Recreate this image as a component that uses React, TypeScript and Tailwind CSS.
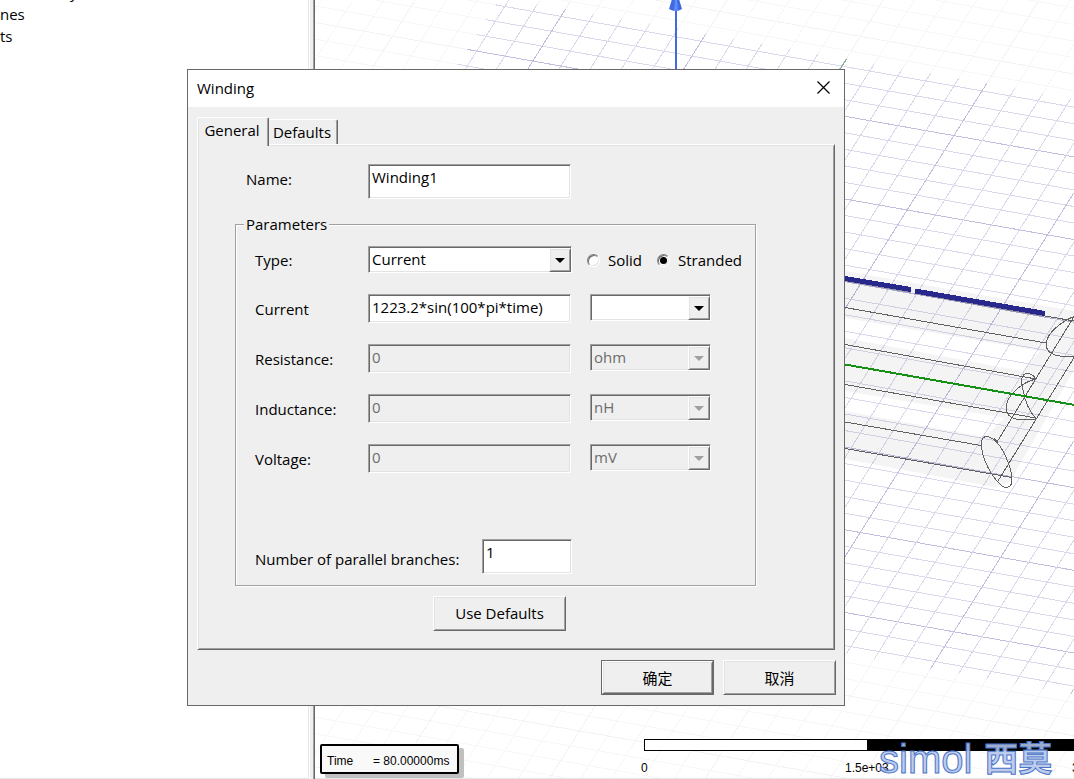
import { ReactNode } from "react";

const sunken =
  "border border-t-[#a0a0a0] border-l-[#a0a0a0] border-b-white border-r-white shadow-[inset_1px_1px_0_#696969,inset_-1px_-1px_0_#e3e3e3]";
const raised =
  "border border-t-white border-l-white border-b-[#696969] border-r-[#696969] shadow-[inset_1px_1px_0_#e3e3e3,inset_-1px_-1px_0_#a0a0a0]";

// The ground grid is a lattice of two line families.
// "rows" run along the green axis, "cols" cross them.
const ROW_SLOPE = 0.177;
const COL_SLOPE = 0.629;

const rowY = (i: number, x: number) => 364.4 + i * 16.54 + ROW_SLOPE * (x - 845);
const colX = (i: number, y: number) => 568.7 + i * 31.2 - COL_SLOPE * (y - 500);

const range = (from: number, to: number) =>
  Array.from({ length: to - from + 1 }, (_, i) => from + i);

const GridLines = ({ minor, major }: { minor: string; major: string }) => (
  <g shapeRendering="crispEdges">
    {range(-30, 40).map((i) => (
      <line key={`r${i}`} x1={300} y1={rowY(i, 300)} x2={1500} y2={rowY(i, 1500)} stroke={i % 5 === 0 ? major : minor} />
    ))}
    {range(-24, 50).map((i) => (
      <line key={`c${i}`} x1={colX(i, -20)} y1={-20} x2={colX(i, 900)} y2={900} stroke={i % 5 === 0 ? major : minor} />
    ))}
  </g>
);

const Scene = () => (
  <svg className="absolute inset-0 h-full w-full" aria-hidden="true">
    <defs>
      <clipPath id="ground">
        <path d="M500 -2.7 L1500 174.3 L1500 769.3 L400 575 L186 496 Z" />
      </clipPath>
    </defs>
    <g transform="translate(-315 0)" fill="none">
      <GridLines minor="#f7f7f7" major="#f3f3f3" />
      <g clipPath="url(#ground)">
        <path d="M300 -250 H1500 V900 H300 Z" fill="#fff" />
        <GridLines minor="#dad8eb" major="#c1bede" />
      </g>
      <path d="M846.5 59 L834 79" stroke="#86b386" shapeRendering="crispEdges" />

      {/* windings */}
      <path
        fill="#000"
        fillOpacity="0.045"
        d="M845 271 L1074 311 L1074 370 L1010 482 L994 487 L845 459 V411 L984 437 L1005 418 L845 391 V338 L1022 371 L1040 351 L845 318 Z"
      />
      <g stroke="#606060" shapeRendering="crispEdges">
        <path d="M1045 316 L1080 322" />
        <path d="M845 307.5 L1046 343" />
        <path d="M845 344.5 L1036 379" />
        <path d="M845 384.5 L1036 418" />
        <path d="M845 422 L981 445.5" />
        <path d="M845 448.5 L1012 477.5" />
        <path d="M1075 315 L997 442 L994 438" />
        <path d="M1075 356 L998 481" />
        <path d="M1080 315 C1068 317 1046 331 1046 345 C1047 355 1058 358 1080 356" />
        <path d="M1036 379 C1034 376 1030 373 1026 373.5 C1021 375 1021 382 1023 390 C1025 402 1030 412 1036 418.5" />
        <path d="M1036 379 C1022 382 1006 396 1006 408 C1007 420 1018 421 1036 419" />
        <path d="M982 440 C984 434 992 436 1000 446 C1008 458 1012 472 1012 481 C1011 489 1004 490 997 481 C989 472 979 452 982 440 Z" />
      </g>
      <path d="M845 280 L911 291.5 M915 292.5 L1044 315.5" stroke="#8b8ba0" strokeWidth="3" />
      <path d="M845 278.5 L911 289.5 M915 291 L1045 313.5" stroke="#28288c" strokeWidth="5" shapeRendering="crispEdges" />
      <path d="M845 364.5 L1500 480" stroke="#149014" strokeWidth="2" shapeRendering="crispEdges" />

      {/* z axis */}
      <path d="M676 10 V400" stroke="#4169e1" strokeWidth="2" />
      <path d="M672 -1 H679 L682 9 Q676 13 669 9 Z" fill="#4169e1" />
      <path d="M675 -1 H677 L678 11 H674 Z" fill="#5c8cff" />
    </g>
  </svg>
);

const TreePane = () => (
  <div className="w-[309px] shrink-0 overflow-hidden border-r border-b border-[#e6e6e6] bg-white">
    <ul className="-mt-[19px] text-[15px] leading-[22px]">
      <li className="pl-[70px]">y</li>
      <li>nes</li>
      <li>ts</li>
    </ul>
  </div>
);

const Viewport = () => (
  <div className="relative flex-1 overflow-hidden border-b border-b-[#e6e6e6] bg-white font-['Liberation_Sans',Arial,sans-serif] text-black">
    <Scene />
    <div className="absolute bottom-1 left-[5px] flex h-[30px] w-[139px] items-center rounded-xs border-2 border-black bg-[#f9f9f9] pt-1 pl-[5px] text-[12px] leading-4 whitespace-nowrap shadow-[5px_4px_0_#c0c0c0]">
      <span className="w-[46px] shrink-0">Time</span>
      <span>= 80.00000ms</span>
    </div>
    <div className="absolute right-0 bottom-0 left-[326px]">
      <div className="ml-[3px] flex h-3 border-y border-l border-black">
        <div className="w-[222px] bg-white" />
        <div className="flex-1 bg-black" />
      </div>
      <div className="flex h-[27px] items-center pt-1.5 text-[12px] leading-4 whitespace-nowrap">
        <span className="w-[204px] shrink-0">0</span>
        <span className="w-[227px] shrink-0">1.5e+03</span>
        <span>3e+03 (mm)</span>
      </div>
    </div>
    <div className="absolute bottom-0 left-[564px] flex items-center gap-3 leading-[38px] whitespace-nowrap text-[#b4c5ea]/90 [-webkit-text-stroke:1px_#4a74c6]">
      <span className="text-[40px]">simol</span>
      <span className="pb-1 font-['Noto_Sans_CJK_SC',sans-serif] text-[34px] leading-[34px] font-bold">西莫</span>
    </div>
  </div>
);

const Field = ({ id, value, disabled, className }: { id: string; value: string; disabled?: boolean; className: string }) => (
  <input
    id={id}
    type="text"
    defaultValue={value}
    disabled={disabled}
    className={`${sunken} ${className} shrink-0 bg-white pl-[3px] outline-none disabled:bg-[#efefef] disabled:text-[#6d6d6d]`}
  />
);

const Dropdown = ({ id, label, options, disabled, className }: { id: string; label?: string; options: string[]; disabled?: boolean; className: string }) => (
  <div className={`${sunken} ${className} relative h-[27px] shrink-0 ${disabled ? "bg-[#efefef]" : "bg-white"}`}>
    <select
      id={id}
      aria-label={label}
      disabled={disabled}
      className="h-[23px] w-full appearance-none bg-transparent pl-[3px] leading-[22px] outline-none disabled:text-[#6d6d6d] disabled:opacity-100"
    >
      {options.map((option) => (
        <option key={option}>{option}</option>
      ))}
    </select>
    <span className={`${raised} pointer-events-none absolute top-px right-0 bottom-0 flex w-[22px] items-center justify-center bg-[#efefef] pr-px`}>
      <svg width="10" height="5" className={disabled ? "fill-[#a0a0a0]" : "fill-black"}>
        <path d="M0 0 H10 L5 5 Z" />
      </svg>
    </span>
  </div>
);

const Radio = ({ label, checked }: { label: string; checked?: boolean }) => (
  <label className="flex items-center gap-2">
    <input
      type="radio"
      name="conductor"
      defaultChecked={checked}
      className="grid size-[13px] appearance-none place-items-center rounded-full border border-t-[#808080] border-r-white border-b-white border-l-[#808080] bg-white shadow-[inset_1px_1px_0_#696969,inset_-1px_-1px_0_#e3e3e3] before:size-[7px] before:rounded-full checked:before:bg-black"
    />
    {label}
  </label>
);

const Row = ({ id, label, children }: { id: string; label: string; children: ReactNode }) => (
  <div className="flex items-center">
    <label htmlFor={id} className="w-[113px] shrink-0 pt-px">
      {label}
    </label>
    {children}
  </div>
);

const disabledRows = [
  { id: "resistance", label: "Resistance:", unit: "ohm" },
  { id: "inductance", label: "Inductance:", unit: "nH" },
  { id: "voltage", label: "Voltage:", unit: "mV" },
];

const WindingDialog = () => (
  <div role="dialog" aria-labelledby="dialog-title" className="absolute top-[69px] left-[187px] w-[658px] border border-[#696969] bg-[#efefef]">
    <div className="flex h-[37px] items-center justify-between bg-white pr-[14px] pb-0.5 pl-[9px]">
      <h1 id="dialog-title">Winding</h1>
      <button type="button" aria-label="Close">
        <svg width="13" height="13" stroke="#000" strokeWidth="1.2">
          <path d="M0.5 0.5 L12.5 12.5 M12.5 0.5 L0.5 12.5" />
        </svg>
      </button>
    </div>

    <div className="px-[9px] py-[10px]">
      <div role="tablist" className="flex items-end">
        <button
          type="button"
          role="tab"
          aria-selected="true"
          className="relative z-10 -mb-[2px] h-[29px] w-[72px] rounded-t-xs border border-b-0 border-t-white border-r-[#696969] border-l-white bg-[#efefef] pr-0.5 pb-[5px] shadow-[inset_1px_0_0_#e3e3e3,inset_-1px_0_0_#a0a0a0]"
        >
          General
        </button>
        <button
          type="button"
          role="tab"
          aria-selected="false"
          className="h-[25px] w-[69px] rounded-t-xs border border-b-0 border-l-0 border-t-white border-r-[#696969] pr-0.5 shadow-[inset_-1px_0_0_#a0a0a0]"
        >
          Defaults
        </button>
      </div>

      <div role="tabpanel" className={`${raised} flex flex-col pt-[19px] pr-[78px] pb-[18px] pl-[37px]`}>
        <div className="flex items-center pl-[11px]">
          <label htmlFor="name" className="w-[122px] shrink-0 pb-[5px]">
            Name:
          </label>
          <Field id="name" value="Winding1" className="h-[35px] w-[203px] pb-[9px]" />
        </div>

        <fieldset className="mt-3.5 border border-[#a0a0a0] pt-[11px] pb-[11px] pl-[19px] shadow-[inset_1px_1px_0_#fff,1px_1px_0_#fff]">
          <legend className="-ml-[11px] bg-[#efefef] px-[2px] leading-[22px]">Parameters</legend>
          <div className="flex flex-col gap-[21px]">
            <Row id="type" label="Type:">
              <Dropdown id="type" options={["Current", "Voltage", "External"]} className="w-[204px]" />
              <div className="flex gap-[15px] pt-px pl-[15px] whitespace-nowrap">
                <Radio label="Solid" />
                <Radio label="Stranded" checked />
              </div>
            </Row>
            <Row id="current" label="Current">
              <Field id="current" value="1223.2*sin(100*pi*time)" className="mr-[19px] h-[29px] w-[203px] pb-[3px]" />
              <Dropdown id="current-unit" label="Current unit" options={["", "A", "mA", "kA"]} className="w-[121px] self-start" />
            </Row>
            {disabledRows.map((row) => (
              <Row key={row.id} id={row.id} label={row.label}>
                <Field id={row.id} value="0" disabled className="mr-[19px] h-[29px] w-[203px] pb-[3px]" />
                <Dropdown id={`${row.id}-unit`} label={`${row.label} unit`} options={[row.unit]} disabled className="w-[121px] self-start" />
              </Row>
            ))}
          </div>
          <div className="mt-[66px] flex items-center">
            <label htmlFor="branches" className="w-[227px] shrink-0 pt-[5px]">
              Number of parallel branches:
            </label>
            <Field id="branches" value="1" className="h-[35px] w-[90px] pb-[9px]" />
          </div>
        </fieldset>

        <button type="button" className={`${raised} mt-[10px] ml-[198px] h-[35px] w-[133px] pb-0.5`}>
          Use Defaults
        </button>
      </div>

      <div className="mt-[10px] -mr-px flex justify-end gap-[9px]">
        <div className="border border-[#696969]">
          <button type="button" className={`${raised} block h-[33px] w-[111px]`}>
            确定
          </button>
        </div>
        <button type="button" className={`${raised} h-[35px] w-[113px]`}>
          取消
        </button>
      </div>
    </div>
  </div>
);

export default function App() {
  return (
    <main className="relative flex h-screen min-h-[706px] overflow-hidden bg-white font-['Open_Sans','Noto_Sans_CJK_SC',sans-serif] text-[15px] leading-5 text-black">
      <TreePane />
      <div className="w-[6px] shrink-0 border-r border-l border-r-[#696969] border-l-white bg-[#efefef] shadow-[inset_-1px_0_0_#a0a0a0]" />
      <Viewport />
      <WindingDialog />
    </main>
  );
}
